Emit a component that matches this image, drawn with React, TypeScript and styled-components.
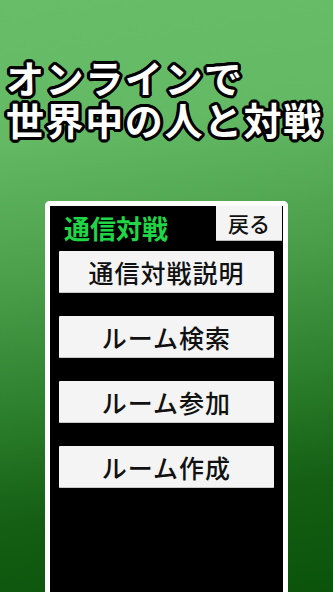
import styled, { createGlobalStyle } from "styled-components";

const GlobalStyle = createGlobalStyle`
  html, body {
    margin: 0;
    padding: 0;
  }
  body {
    font-family: "Noto Sans CJK JP", "Noto Sans", sans-serif;
  }
`;

const Screen = styled.div`
  width: 333px;
  height: 592px;
  overflow: hidden;
  display: flex;
  flex-direction: column;
  background: linear-gradient(
    172deg,
    #68be68 0%,
    #64b964 22%,
    #4a9e4a 45%,
    #2c7f2c 65%,
    #145f14 82%,
    #0b530b 100%
  );
`;

const Headline = styled.h1`
  margin: 56px 0 0 6px;
  font-size: 38px;
  font-weight: 700;
  color: #fff;
  letter-spacing: 1.6px;
  white-space: nowrap;
  text-shadow:
    -2px -2px 0 #000, 2px -2px 0 #000, -2px 2px 0 #000, 2px 2px 0 #000,
    0 -3px 0 #000, 0 3px 0 #000, -3px 0 0 #000, 3px 0 0 #000,
    -1px -3px 0 #000, 1px -3px 0 #000, -1px 3px 0 #000, 1px 3px 0 #000,
    -3px -1px 0 #000, -3px 1px 0 #000, 3px -1px 0 #000, 3px 1px 0 #000;
`;

const HeadLine = styled.span`
  display: block;
  height: 42px;
  line-height: 42px;
`;

const Panel = styled.div`
  flex: 1;
  width: 233px;
  margin: 61px auto 0;
  background: #000;
  border: 5px solid #fff;
  border-bottom: none;
  border-radius: 5px 5px 0 0;
  display: flex;
  flex-direction: column;
  align-items: center;
`;

const PanelHeader = styled.div`
  align-self: stretch;
  display: flex;
  justify-content: space-between;
  align-items: flex-start;
  padding: 0 1px 0 14px;
`;

const PanelTitle = styled.div`
  margin-top: 7px;
  font-size: 26px;
  line-height: 30px;
  font-weight: 700;
  color: #1ed646;
`;

const BackButton = styled.button`
  width: 66px;
  height: 35px;
  padding: 0;
  border: none;
  border-bottom: 1px solid #bbb;
  background: #f4f4f4;
  font-family: inherit;
  font-size: 21px;
  font-weight: 500;
  color: #111;
`;

const Menu = styled.div`
  display: flex;
  flex-direction: column;
  gap: 23px;
  margin-top: 8px;
`;

const MenuButton = styled.button`
  width: 215px;
  height: 42px;
  padding: 0;
  border: none;
  border-radius: 1px;
  border-bottom: 1px solid #c8c8c8;
  background: #f4f4f4;
  font-family: inherit;
  font-size: 25px;
  font-weight: 500;
  line-height: 42px;
  color: #111;
  letter-spacing: 1px;
`;

const items = ["通信対戦説明", "ルーム検索", "ルーム参加", "ルーム作成"];

export default function App() {
  return (
    <>
      <GlobalStyle />
      <Screen>
        <Headline>
          <HeadLine>オンラインで</HeadLine>
          <HeadLine>世界中の人と対戦</HeadLine>
        </Headline>
        <Panel>
          <PanelHeader>
            <PanelTitle>通信対戦</PanelTitle>
            <BackButton>戻る</BackButton>
          </PanelHeader>
          <Menu>
            {items.map((label) => (
              <MenuButton key={label}>{label}</MenuButton>
            ))}
          </Menu>
        </Panel>
      </Screen>
    </>
  );
}
